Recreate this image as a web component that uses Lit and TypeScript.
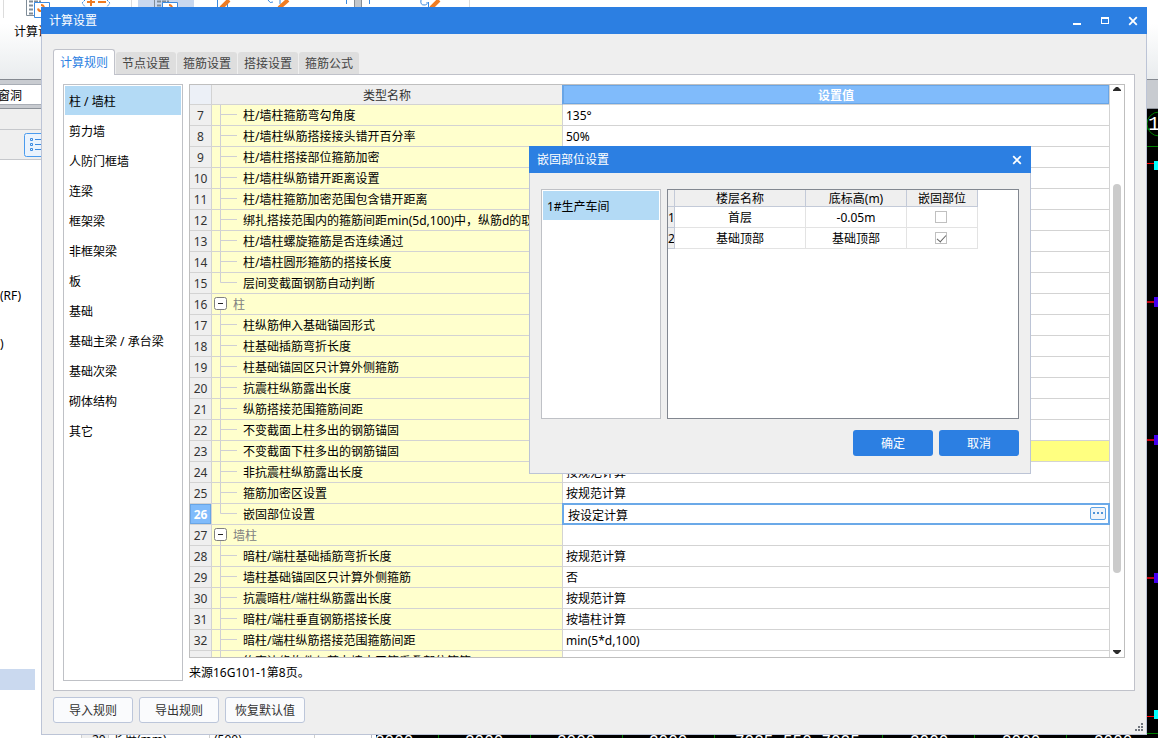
import { LitElement, html, css, svg, nothing } from "lit";
import { customElement, state } from "lit/decorators.js";
import { classMap } from "lit/directives/class-map.js";

interface Row {
  no: number;
  name: string;
  value?: string;
  kind?: "group" | "last";
  warn?: boolean;
}

const ROWS: Row[] = [
  { no: 7, name: "柱/墙柱箍筋弯勾角度", value: "135°" },
  { no: 8, name: "柱/墙柱纵筋搭接接头错开百分率", value: "50%" },
  { no: 9, name: "柱/墙柱搭接部位箍筋加密" },
  { no: 10, name: "柱/墙柱纵筋错开距离设置" },
  { no: 11, name: "柱/墙柱箍筋加密范围包含错开距离" },
  { no: 12, name: "绑扎搭接范围内的箍筋间距min(5d,100)中，纵筋d的取值" },
  { no: 13, name: "柱/墙柱螺旋箍筋是否连续通过" },
  { no: 14, name: "柱/墙柱圆形箍筋的搭接长度" },
  { no: 15, name: "层间变截面钢筋自动判断", kind: "last" },
  { no: 16, name: "柱", kind: "group" },
  { no: 17, name: "柱纵筋伸入基础锚固形式" },
  { no: 18, name: "柱基础插筋弯折长度" },
  { no: 19, name: "柱基础锚固区只计算外侧箍筋" },
  { no: 20, name: "抗震柱纵筋露出长度" },
  { no: 21, name: "纵筋搭接范围箍筋间距" },
  { no: 22, name: "不变截面上柱多出的钢筋锚固" },
  { no: 23, name: "不变截面下柱多出的钢筋锚固", warn: true },
  { no: 24, name: "非抗震柱纵筋露出长度", value: "按规范计算" },
  { no: 25, name: "箍筋加密区设置", value: "按规范计算" },
  { no: 26, name: "嵌固部位设置", value: "按设定计算", kind: "last" },
  { no: 27, name: "墙柱", kind: "group" },
  { no: 28, name: "暗柱/端柱基础插筋弯折长度", value: "按规范计算" },
  { no: 29, name: "墙柱基础锚固区只计算外侧箍筋", value: "否" },
  { no: 30, name: "抗震暗柱/端柱纵筋露出长度", value: "按规范计算" },
  { no: 31, name: "暗柱/端柱垂直钢筋搭接长度", value: "按墙柱计算" },
  { no: 32, name: "暗柱/端柱纵筋搭接范围箍筋间距", value: "min(5*d,100)" },
  { no: 33, name: "约束边缘构件与剪力墙水平筋重叠部位箍筋" },
];

const CATEGORIES = [
  "柱 / 墙柱", "剪力墙", "人防门框墙", "连梁", "框架梁", "非框架梁",
  "板", "基础", "基础主梁 / 承台梁", "基础次梁", "砌体结构", "其它",
];

const TABS = ["计算规则", "节点设置", "箍筋设置", "搭接设置", "箍筋公式"];

const FLOORS = [
  { no: 1, name: "首层", level: "-0.05m", fixed: false },
  { no: 2, name: "基础顶部", level: "基础顶部", fixed: true },
];

const closeIcon = html`<svg width="10" height="10" viewBox="0 0 10 10" aria-hidden="true">
  <path d="M1.2 1.2 8.8 8.8M8.8 1.2 1.2 8.8" stroke="#fff" stroke-width="1.8" fill="none" />
</svg>`;

@customElement("app-root")
export class AppRoot extends LitElement {
  @state() private tab = 0;
  @state() private category = 0;

  static styles = css`
    :host {
      display: block;
      font: 12px/20px "Noto Sans", "Noto Sans CJK SC", sans-serif;
      color: #000;
    }
    * { box-sizing: border-box; }
    button, input {
      font: inherit;
      color: inherit;
      margin: 0;
      padding: 0;
      border: 0;
      background: none;
    }
    svg { display: block; }
    ul { list-style: none; margin: 0; padding: 0; }

    .desktop {
      position: relative;
      height: 100vh;
      overflow: hidden;
      display: flex;
      flex-direction: column;
      background: #fff;
    }
    .ribbon {
      flex: none;
      height: 80px;
      background: linear-gradient(#fff 30%, #e9ecee);
      border-bottom: 1px solid #858a91;
      overflow: hidden;
    }
    .ribbon-label { padding-left: 14px; line-height: 28px; }
    .strip {
      flex: none;
      height: 29px;
      padding: 4px 0 3px;
      background: #c8cbd0;
      border-bottom: 1px solid #8d9299;
    }
    .combo {
      width: 300px;
      height: 21px;
      line-height: 21px;
      background: #fff;
      border-top: 1px solid #a9aeb6;
      border-bottom: 1px solid #a9aeb6;
      text-indent: -2px;
    }
    .work { flex: 1; min-height: 0; display: flex; }
    .side {
      width: 372px;
      flex: none;
      display: flex;
      flex-direction: column;
      border-right: 1px solid #b5b9c2;
    }
    .side-title, .side-tools { flex: none; background: #efefef; border-bottom: 1px solid #c6c8cc; }
    .side-title { height: 21px; }
    .side-tools { height: 30px; padding: 3px 24px; }
    .tree { flex: 1; min-height: 0; padding-top: 124px; display: flex; flex-direction: column; }
    .tree li { height: 24px; line-height: 24px; flex: none; }
    .tree .current { width: 35px; height: 21px; margin: auto 0 40px; background: #cad9ef; }
    .props { flex: none; display: flex; height: 8px; margin-left: 81px; border-left: 1px solid #cfcfcf; overflow: hidden; }
    .props span { padding-left: 4px; border-right: 1px solid #cfcfcf; }
    .props .p-no { width: 27px; padding-left: 10px; background: #efefef; }
    .props .p-name { width: 101px; }
    .props .p-val { width: 105px; }
    .canvas { flex: 1; min-width: 0; margin-left: 4px; background: #000; overflow: hidden; }

    .window { position: absolute; display: flex; flex-direction: column; }
    .main-window { inset: 7px 11px 3px 41px; }
    .sub-window { left: 529px; top: 146px; width: 502px; }
    .titlebar {
      flex: none;
      display: flex;
      height: 27px;
      line-height: 27px;
      padding-left: 8px;
      background: #2c7fe2;
      color: #fff;
    }
    .titlebar h1 { flex: 1; margin: 0; font: inherit; }
    .titlebar button { width: 28px; display: flex; align-items: center; justify-content: center; }
    .window-body {
      flex: 1;
      min-height: 0;
      display: flex;
      flex-direction: column;
      background: #efefef;
      border: 1px solid #bcc4d6;
      border-top: 0;
    }
    .main-window .window-body { padding: 15px 11px 11px; }
    .sub-window .window-body { padding: 16px 11px 17px; }

    .tabs { flex: none; display: flex; align-items: flex-end; gap: 1px; height: 25px; }
    .tab {
      width: 60px;
      height: 22px;
      line-height: 20px;
      padding-top: 2px;
      border-radius: 3px 3px 0 0;
      background: #dedede;
      color: #444;
    }
    .tab.on {
      position: relative;
      width: 62px;
      height: 26px;
      line-height: 24px;
      padding-top: 0;
      margin-bottom: -1px;
      background: #fff;
      color: #2c7fe2;
      border: 1px solid #c0c2ca;
      border-bottom: 0;
    }
    .panel {
      flex: 1;
      min-height: 0;
      display: flex;
      gap: 6px;
      padding: 9px;
      background: #fff;
      border: 1px solid #c0c2ca;
    }
    .list {
      flex: none;
      width: 120px;
      padding: 1px;
      display: flex;
      flex-direction: column;
      gap: 1px;
      background: #fff;
      border: 1px solid #bfc1c6;
    }
    .list button { width: 100%; height: 29px; text-align: left; padding: 2px 0 0 4px; display: block; }
    .list .on { background: #b3daf5; }

    .content { flex: 1; min-width: 0; display: flex; flex-direction: column; }
    .grid-frame {
      flex: 1;
      min-height: 0;
      display: flex;
      overflow: hidden;
      border: 1px solid #bfbfbf;
    }
    .grid-view { flex: 1; min-width: 0; overflow: hidden; }
    table { border-collapse: separate; border-spacing: 0; table-layout: fixed; }
    th, td { padding: 0; font-weight: normal; overflow: hidden; white-space: nowrap; }
    .grid { width: 100%; }
    .grid .c-no { width: 22px; }
    .grid .c-name { width: 351px; }
    .grid th, .grid td {
      height: 21px;
      padding-top: 2px;
      line-height: 18px;
      border-right: 1px solid #d3d3d3;
      border-bottom: 1px solid #d3d3d3;
    }
    .grid thead th { height: 20px; line-height: 17px; background: #efefef; color: #333; }
    .grid thead .corner { background: #ecf0f7; }
    .grid thead .h-name { border-right-color: #68a5e6; }
    .grid thead .h-value {
      background: #80bbfb;
      color: #fff;
      font-weight: bold;
      box-shadow: inset 0 0 0 1px #68a5e6;
    }
    .grid tbody th { background: #efefef; color: #333; }
    .grid tbody .no-on { background: #80bbfb; color: #fff; font-weight: bold; box-shadow: inset 0 0 0 1px #68a5e6; }
    .grid .name { background: #ffffcd; padding-top: 0; }
    .name-in { display: flex; align-items: center; height: 20px; }
    .name-in span { padding-top: 2px; }
    .branch { flex: none; width: 31px; }
    .toggle { flex: none; width: 21px; padding-left: 2px; height: 20px; }
    .group { color: #808080; }
    .grid .value { padding-left: 3px; }
    .grid .warn { background: #ffff80; }
    .grid .editing { position: relative; overflow: visible; }
    .editor {
      position: absolute;
      inset: -1px;
      display: flex;
      align-items: flex-start;
      padding: 0 2px 0 4px;
      background: #fff;
      border: 2px solid #6ba9e8;
    }
    .editor input { flex: 1; min-width: 0; height: 18px; padding-top: 2px; line-height: 16px; outline: 0; }
    .editor button {
      width: 16px;
      height: 13px;
      margin-top: 2px;
      border: 1px solid #5ea3e6;
      border-radius: 2px;
      background: #f0f4fa;
      display: flex;
      align-items: center;
      justify-content: center;
    }
    .scroll {
      flex: none;
      width: 14px;
      padding: 2px 3px;
      display: flex;
      flex-direction: column;
    }
    .rail { flex: 1; display: flex; flex-direction: column; padding: 92px 0 77px; }
    .thumb { flex: 1; width: 8px; border-radius: 4px; background: #cbcbcb; }
    .source { flex: none; margin: 7px 0 0; line-height: 16px; }

    .actions { flex: none; display: flex; gap: 6px; padding-top: 6px; }
    .plain {
      width: 80px;
      height: 26px;
      padding-top: 2px;
      border: 1px solid #bcc6da;
      border-radius: 3px;
      background: #fafbfd;
      color: #333;
    }
    .grip { position: absolute; right: 4px; bottom: 4px; }

    .split { display: flex; gap: 6px; height: 230px; }
    .floors { flex: 1; min-width: 0; background: #fff; border: 1px solid #828790; }
    .floors .f-no { width: 7px; }
    .floors .f-name { width: 131px; }
    .floors .f-level { width: 101px; }
    .floors .f-fix { width: 71px; }
    .floors table { width: 310px; }
    .floors th, .floors td {
      height: 21px;
      padding-top: 2px;
      line-height: 18px;
      text-align: center;
      border-right: 1px solid #e3e3e3;
      border-bottom: 1px solid #e3e3e3;
    }
    .floors thead th { height: 17px; line-height: 14px; background: #efefef; border-color: #c3cad8; }
    .floors tbody th { background: #efefef; border-color: #c3cad8; }
    .floors .fix { padding: 0 2px 0 0; }
    .tick {
      appearance: none;
      display: block;
      width: 12px;
      height: 12px;
      margin: 0 auto;
      border: 1px solid #c0c0c0;
      background: #fff;
    }
    .tick:checked::before {
      content: "";
      display: block;
      width: 8px;
      height: 4px;
      margin: 2px 1px;
      border: solid #666;
      border-width: 0 0 1px 1px;
      transform: rotate(-48deg);
    }
    .sub-actions { display: flex; justify-content: flex-end; gap: 6px; padding-top: 11px; }
    .primary { width: 80px; height: 26px; padding-top: 2px; border-radius: 3px; background: #2c7fe2; color: #fff; }
  `;

  private ribbonIcons() {
    return html`<svg width="480" height="18" viewBox="0 0 480 18" aria-hidden="true">
      <path d="M3.5 0V18M131.5 0V8M469.5 0V8" stroke="#dcdcdc" />
      <rect x="138" width="56" height="8" fill="#c9d8ef" />
      ${[0, 128].map((dx) => svg`<g transform="translate(${dx} 0)">
        <path d="M26.5 0V15.5H34" fill="none" stroke="#7f8c98" />
        <path d="M29 1.5H41M29 5.5H34M29 9.5H34M29 13.5H34" stroke="#7f8c98" stroke-width="2" stroke-dasharray="4 1" />
        <path d="M34.500 2.500H49.500V17.500H34.500Z" fill="#fff" stroke="#3b8ae0" />
        <path d="M38 8.500A3 3 0 1 0 41 5" fill="none" stroke="#f07c22" stroke-width="2" />
      </g>`)}
      <path d="M85 0L82 3 86 8M107 0L110 3 106 8" fill="none" stroke="#3b8ae0" stroke-dasharray="2 1" />
      <path d="M87 2H95M91 0V6M98 2H106" stroke="#f07c22" stroke-width="2" />
      <path d="M217.500 0V8M227.500 3V8M268 0Q270 4 273 2M280 0V4M346.500 0V4M369.500 0V4M421 0Q420 5 424 5T427 2M428.500 2V8" fill="none" stroke="#3b8ae0" />
      <path d="M229 0L221 8M288 0L279 8M439 0L431 8" stroke="#f07c22" stroke-width="4" />
      <rect x="354" width="8" height="8" fill="#c3c7cc" />
      <path d="M354.500 0V8M361.500 0V8" stroke="#888e95" />
    </svg>`;
  }

  private drawing() {
    const spans: [number, string][] = [
      [-1, "3000"], [89, "3000"], [181, "3000"], [273, "3000"],
      [359, "7025,550,7025"], [534, "3000"], [626, "3000"], [718, "3000"],
    ];
    return html`<svg width="782" height="640" viewBox="0 0 782 640" aria-hidden="true">
      <g font-family="Liberation Mono, monospace" font-size="16" fill="#fff">
        ${spans.map(([x, t]) => svg`<text x=${x} y="637">${t}</text>`)}
        <text x="772" y="21" font-size="20">1</text>
      </g>
      <g fill="none" stroke="#008000">
        <circle cx="783" cy="15" r="12" />
        <path d="M770 20H774M770 37.500H782M770 624.500H782M62.500 626V632M154.500 626V632M246.500 626V632M338.500 626V632M506.500 626V632M598.500 626V632M690.500 626V632" />
      </g>
      <path d="M770 54.500H782M770 607.500H782" stroke="#f00" />
      <path d="M770 193H782M770 331H782M770 469H782" stroke="#c00010" stroke-width="2" />
      <path d="M778 52h4v9h-4zM778 601h4v9h-4z" fill="#0ff" />
      <path d="M778 188h4v10h-4zM778 326h4v10h-4zM778 464h4v10h-4z" fill="#4400f0" />
    </svg>`;
  }

  private row(r: Row) {
    const editing = r.no === 26;
    const group = r.kind === "group";
    return html`<tr>
      <th scope="row" class=${classMap({ "no-on": editing })}>${r.no === 33 ? nothing : r.no}</th>
      <td class="name"><div class="name-in">
        ${group
          ? html`<button class="toggle" aria-label="折叠">
              <svg width="14" height="20" viewBox="0 0 14 20">
                <path d="M6.500 16V20" stroke="#cfcfd4" />
                <rect x="0.500" y="3.500" width="12" height="12" rx="2" fill="#fff" stroke="#808080" />
                <path d="M4 9.500H9" stroke="#222" />
              </svg></button><span class="group">${r.name}</span>`
          : html`<svg class="branch" width="31" height="20" viewBox="0 0 31 20">
                <path d=${r.kind === "last" ? "M8.500 0V9.500H25" : "M8.500 0V20M8.500 9.500H25"} fill="none" stroke="#cfcfd4" />
              </svg><span>${r.name}</span>`}
      </div></td>
      ${editing
        ? html`<td class="value editing"><div class="editor">
            <input aria-label=${r.name} .value=${r.value ?? ""} />
            <button aria-label="更多"><svg width="10" height="3" viewBox="0 0 10 3">
              <path d="M0 0h2v2h-2zM4 0h2v2h-2zM8 0h2v2h-2z" fill="#4f94d8" /></svg></button>
          </div></td>`
        : html`<td class=${classMap({ value: true, warn: !!r.warn })}>${r.value ?? nothing}</td>`}
    </tr>`;
  }

  private arrow(d: string) {
    return html`<svg width="8" height="5" viewBox="0 0 8 5" aria-hidden="true"><path d=${d} fill="#2b2b2b" /></svg>`;
  }

  render() {
    return html`<div class="desktop">
      <div class="ribbon">${this.ribbonIcons()}<div class="ribbon-label">计算设置</div></div>
      <div class="strip"><div class="combo">窗洞</div></div>
      <div class="work">
        <div class="side">
          <div class="side-title"></div>
          <div class="side-tools">
            <svg width="24" height="24" viewBox="0 0 24 24" aria-hidden="true">
              <rect x="0.500" y="0.500" width="23" height="23" rx="2" fill="#eaf3fd" stroke="#4a9bee" />
              <path d="M6.500 5.500h2v2h-2zM6.500 10.500h2v2h-2zM6.500 15.500h2v2h-2zM11 6.500H19M11 11.500H19M11 16.500H19" fill="none" stroke="#3b8ae0" />
            </svg>
          </div>
          <ul class="tree"><li>(RF)</li><li></li><li>)</li><li class="current"></li></ul>
          <div class="props"><span class="p-no">20</span><span class="p-name">长度(mm)</span><span class="p-val">(500)</span></div>
        </div>
        <div class="canvas">${this.drawing()}</div>
      </div>

      <section class="window main-window">
        <header class="titlebar">
          <h1>计算设置</h1>
          <button aria-label="最小化"><svg width="8" height="10" viewBox="0 0 8 10"><path d="M0 7h8v2h-8z" fill="#fff" /></svg></button>
          <button aria-label="最大化"><svg width="8" height="8" viewBox="0 0 8 8"><path d="M0 0h8v7H0zM1 2v4h6V2z" fill="#fff" fill-rule="evenodd" /></svg></button>
          <button aria-label="关闭">${closeIcon}</button>
        </header>
        <div class="window-body">
          <div class="tabs" role="tablist">
            ${TABS.map((t, i) => html`<button role="tab" class=${classMap({ tab: true, on: i === this.tab })}
              aria-selected=${i === this.tab} @click=${() => (this.tab = i)}>${t}</button>`)}
          </div>
          <div class="panel">
            <ul class="list">
              ${CATEGORIES.map((c, i) => html`<li><button class=${classMap({ on: i === this.category })}
                @click=${() => (this.category = i)}>${c}</button></li>`)}
            </ul>
            <div class="content">
              <div class="grid-frame">
                <div class="grid-view">
                  <table class="grid">
                    <colgroup><col class="c-no" /><col class="c-name" /><col /></colgroup>
                    <thead><tr><th class="corner"></th><th class="h-name" scope="col">类型名称</th><th class="h-value" scope="col">设置值</th></tr></thead>
                    <tbody>${ROWS.map((r) => this.row(r))}</tbody>
                  </table>
                </div>
                <div class="scroll">
                  ${this.arrow("M3 0h2l3 3v1H0V3z")}
                  <div class="rail"><div class="thumb"></div></div>
                  ${this.arrow("M0 0h8v1L5 4H3L0 1z")}
                </div>
              </div>
              <p class="source">来源16G101-1第8页。</p>
            </div>
          </div>
          <div class="actions">
            <button class="plain">导入规则</button>
            <button class="plain">导出规则</button>
            <button class="plain">恢复默认值</button>
          </div>
        </div>
        <svg class="grip" width="8" height="8" viewBox="0 0 8 8" aria-hidden="true">
          <path d="M6 0h2v2h-2zM3 3h2v2h-2zM6 3h2v2h-2zM0 6h2v2h-2zM3 6h2v2h-2zM6 6h2v2h-2z" fill="#70757d" />
        </svg>
      </section>

      <section class="window sub-window" role="dialog" aria-label="嵌固部位设置">
        <header class="titlebar"><h1>嵌固部位设置</h1><button aria-label="关闭">${closeIcon}</button></header>
        <div class="window-body">
          <div class="split">
            <ul class="list"><li><button class="on">1#生产车间</button></li></ul>
            <div class="floors">
              <table>
                <colgroup><col class="f-no" /><col class="f-name" /><col class="f-level" /><col class="f-fix" /></colgroup>
                <thead><tr><th></th><th scope="col">楼层名称</th><th scope="col">底标高(m)</th><th scope="col">嵌固部位</th></tr></thead>
                <tbody>${FLOORS.map((f) => html`<tr>
                  <th scope="row">${f.no}</th><td>${f.name}</td><td>${f.level}</td>
                  <td class="fix"><input class="tick" type="checkbox" aria-label=${f.name + "嵌固部位"} .checked=${f.fixed} /></td>
                </tr>`)}</tbody>
              </table>
            </div>
          </div>
          <div class="sub-actions"><button class="primary">确定</button><button class="primary">取消</button></div>
        </div>
      </section>
    </div>`;
  }
}
